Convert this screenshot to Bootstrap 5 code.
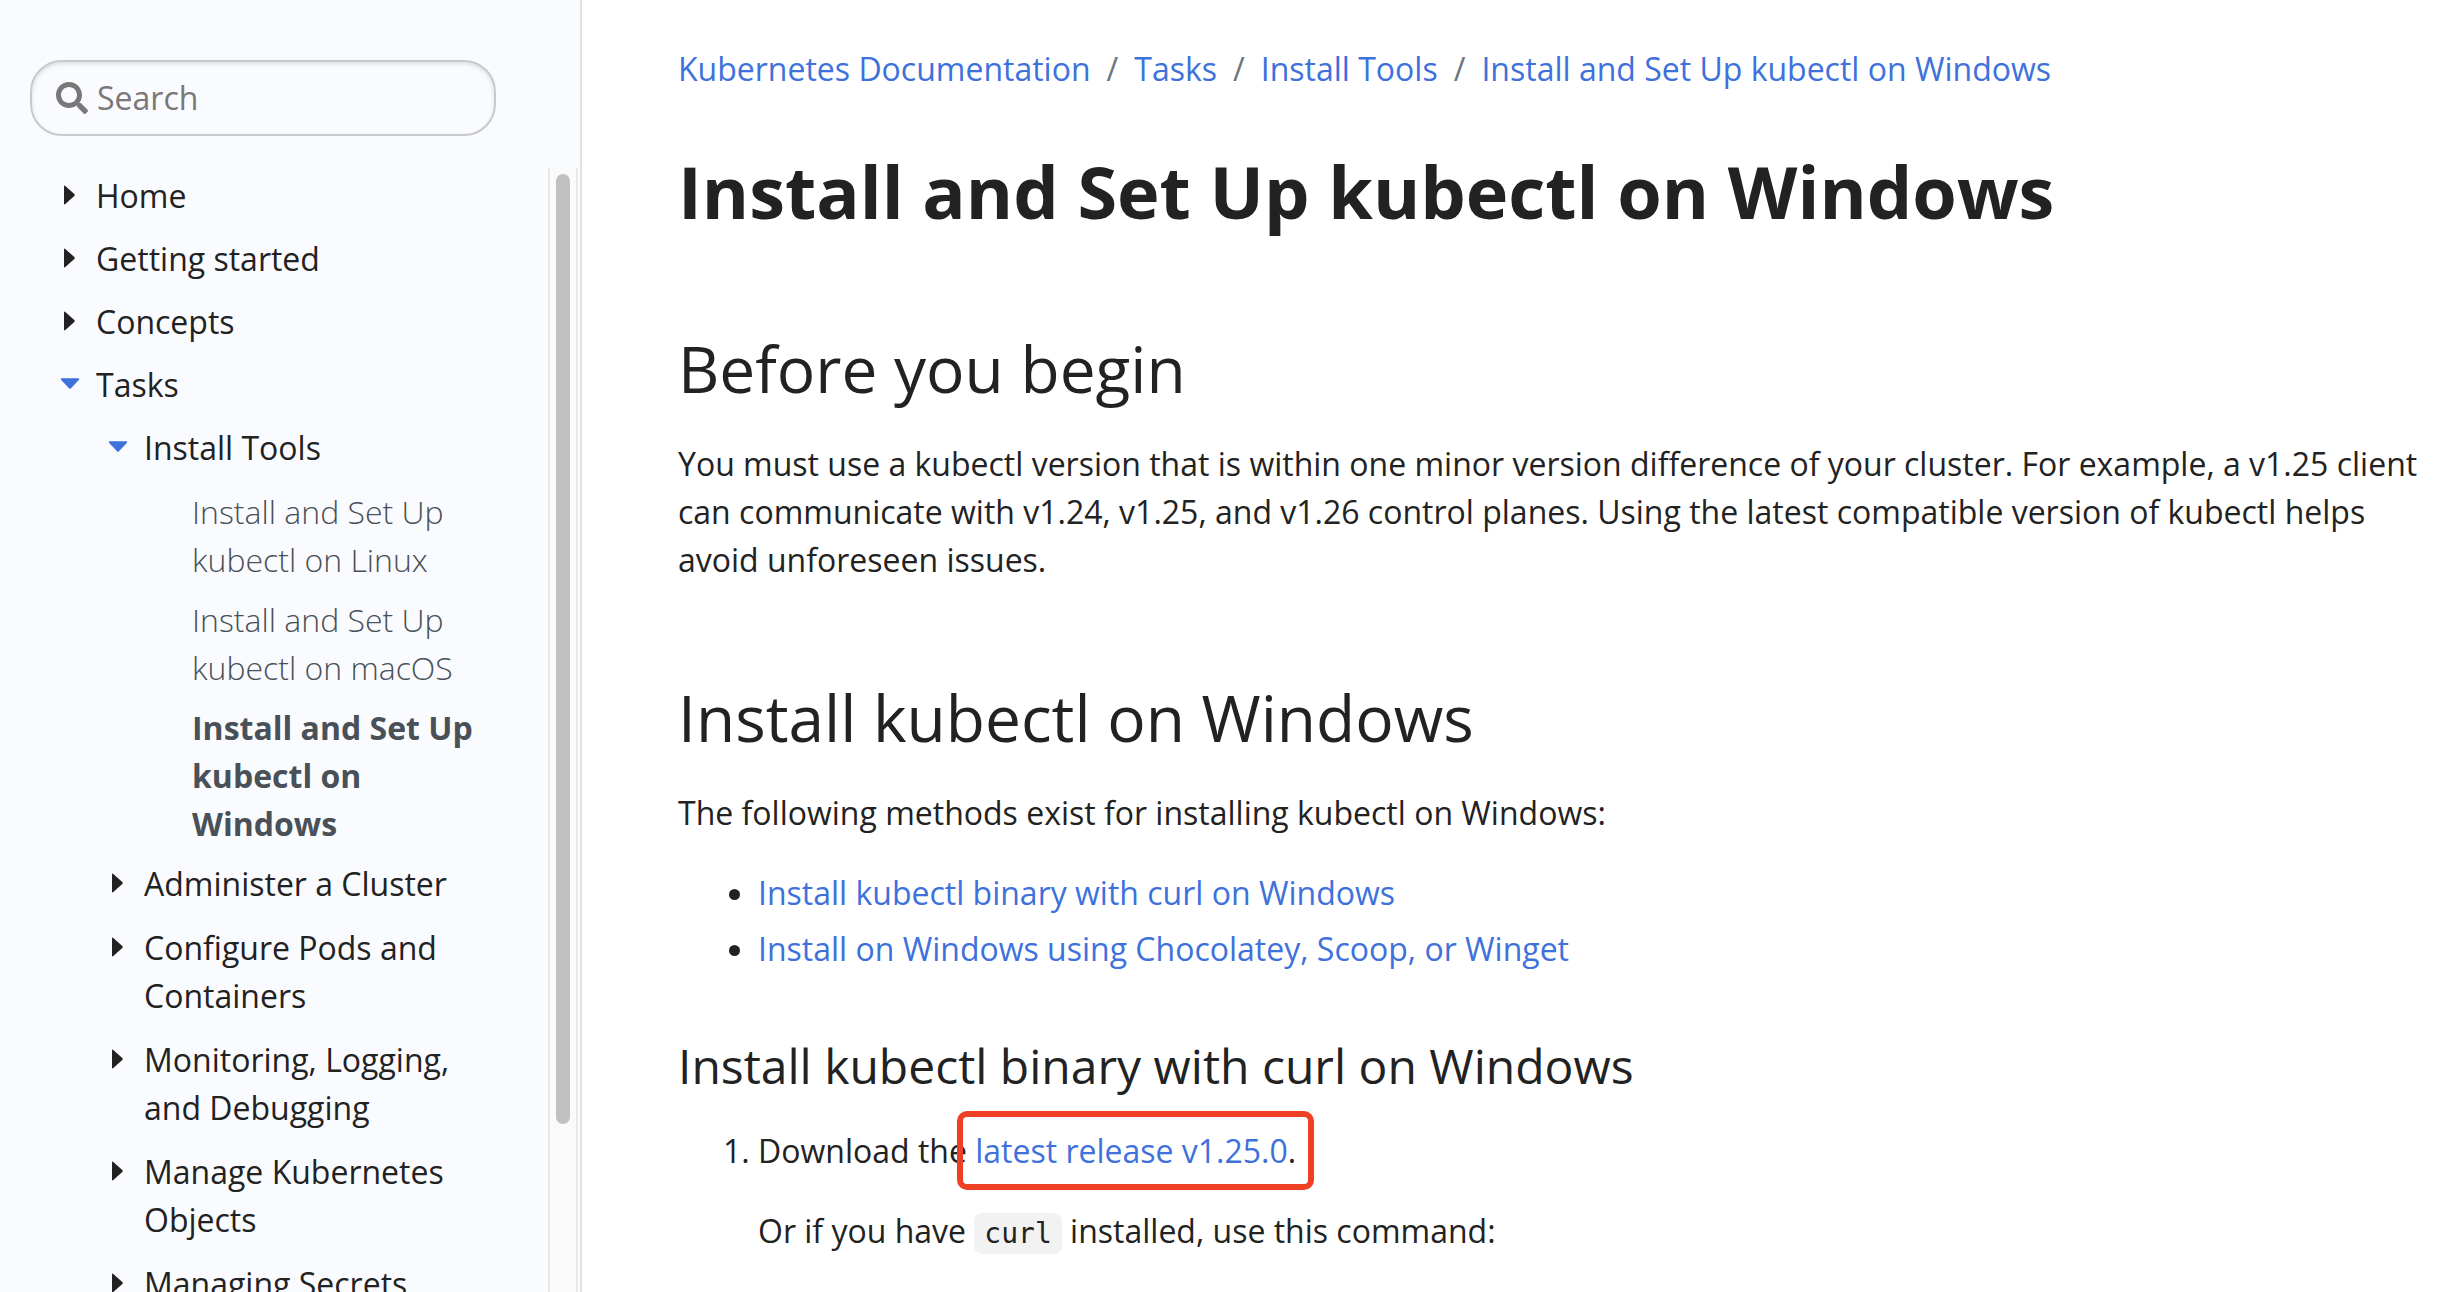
<!DOCTYPE html>
<html lang="en">
<head>
<meta charset="utf-8">
<meta name="viewport" content="width=device-width, initial-scale=1">
<title>Install and Set Up kubectl on Windows | Kubernetes</title>
<link href="https://cdn.jsdelivr.net/npm/bootstrap@5.3.0/dist/css/bootstrap.min.css" rel="stylesheet">
<style>
  body { font: 400 32px/48px "Open Sans", "Noto Sans", sans-serif; color: #222; background: #fff; }
  a { color: #3e71dc; }
  .docs-side { flex: 0 0 582px; min-width: 0; background: #fafbff; border-right: 2px solid #dee2e6; }
  .search-wrap { padding: 60px 84px 32px 30px; }
  .search-box { height: 76px; padding: 0 24px; border: 2px solid #c8c9ca; border-radius: 32px; box-shadow: inset 0 2px 4px rgba(0,0,0,.12); }
  .search-box svg { flex: none; width: 32px; height: 32px; }
  .search-box input { min-width: 0; margin-left: 9px; padding: 0; border: 0; background: transparent; color: #222; outline: 0; }
  .search-box input::placeholder { color: #797777; opacity: 1; }
  .nav-tree { min-width: 0; padding: 4px 48px 0 60px; }
  .nav-tree a { color: #222; }
  .tree-item { display: grid; grid-template-columns: 20px 1fr; column-gap: 16px; padding-bottom: 15px; }
  .nav-sub { padding-left: 48px; }
  .nav-sub .tree-item { padding-bottom: 16px; }
  .caret { width: 20px; height: 48px; fill: #222; }
  .caret.open { fill: #3e71dc; }
  .nav-leaf { padding-left: 84px; }
  .nav-leaf a { display: block; padding-bottom: 12px; color: #495057; font-weight: 300; }
  .nav-leaf a.active { font-weight: 700; }
  .scroll-track { flex: 0 0 30px; margin-right: 2px; padding: 6px 6px 0; background: #fafafa; border: solid #e8e8e8; border-width: 0 2px; }
  .scroll-thumb { height: 85%; border-radius: 8px; background: #c1c1c1; }
  .docs-main { min-width: 0; padding: 45px 32px 0 96px; }
  .breadcrumb { --bs-breadcrumb-item-padding-x: 16px; --bs-breadcrumb-divider-color: #6c757d; margin-bottom: 55px; }
  h1 { font-size: 72px; line-height: 86px; font-weight: 700; margin-bottom: 96px; }
  h2 { font-size: 64px; line-height: 77px; font-weight: 400; margin-bottom: 33px; }
  h3 { font-size: 48px; line-height: 58px; font-weight: 400; margin-bottom: 32px; }
  .docs-main p { margin-bottom: 32px; }
  .docs-main .section-end { margin-bottom: 95px; }
  .docs-main ul, .docs-main ol:not(.breadcrumb) { padding-left: 80px; margin-bottom: 64px; }
  .docs-main ul li { margin-bottom: 8px; }
  code { padding: 4px 10px; border-radius: 8px; background: #f2f2f2; color: #222; font: 28px/34px "DejaVu Sans Mono", monospace; }
  .callout-box { position: relative; }
  .callout-box::after { content: ""; position: absolute; inset: -18px -18px; border: 6px solid #ee4024; border-radius: 10px; pointer-events: none; }
</style>
</head>
<body>
<svg class="d-none" xmlns="http://www.w3.org/2000/svg">
  <symbol id="caret-right" viewBox="0 2 20 48"><path d="M4 16.500Q4 15 5.300 16L14.300 24Q15.300 25 14.300 26L5.300 34Q4 35 4 33.500Z"/></symbol>
  <symbol id="caret-down" viewBox="0 2 20 48"><path d="M1.600 19.300H18.400Q20 19.500 18.800 21L11 29.200Q10 30.200 9 29.200L1.200 21Q0 19.500 1.600 19.300Z"/></symbol>
</svg>
<div class="d-flex vh-100 overflow-hidden">
  <aside class="docs-side d-flex flex-column">
    <form class="search-wrap" role="search">
      <div class="search-box d-flex align-items-center">
        <svg viewBox="0 0 512 512" fill="#797777" aria-hidden="true"><path d="M505 442.700L405.300 343c-4.500-4.500-10.600-7-17-7H372c27.600-35.300 44-79.700 44-128C416 93.100 322.900 0 208 0S0 93.100 0 208s93.100 208 208 208c48.300 0 92.700-16.400 128-44v16.300c0 6.400 2.500 12.500 7 17l99.700 99.700c9.400 9.400 24.600 9.400 33.900 0l28.300-28.300c9.400-9.400 9.400-24.600.1-34zM208 336c-70.700 0-128-57.200-128-128 0-70.700 57.200-128 128-128 70.700 0 128 57.200 128 128 0 70.700-57.200 128-128 128z"/></svg>
        <input class="flex-grow-1" type="search" placeholder="Search" aria-label="Search">
      </div>
    </form>
    <div class="d-flex flex-grow-1 overflow-hidden">
      <nav class="nav-tree flex-grow-1" aria-label="Documentation">
        <div class="tree-item"><svg class="caret"><use href="#caret-right"/></svg><a class="text-decoration-none" href="#">Home</a></div>
        <div class="tree-item"><svg class="caret"><use href="#caret-right"/></svg><a class="text-decoration-none" href="#">Getting started</a></div>
        <div class="tree-item"><svg class="caret"><use href="#caret-right"/></svg><a class="text-decoration-none" href="#">Concepts</a></div>
        <div class="tree-item"><svg class="caret open"><use href="#caret-down"/></svg><a class="text-decoration-none" href="#">Tasks</a></div>
        <div class="nav-sub">
          <div class="tree-item"><svg class="caret open"><use href="#caret-down"/></svg><a class="text-decoration-none" href="#">Install Tools</a></div>
          <div class="nav-leaf">
            <a class="text-decoration-none" href="#">Install and Set Up kubectl on Linux</a>
            <a class="text-decoration-none" href="#">Install and Set Up kubectl on macOS</a>
            <a class="text-decoration-none active" href="#" aria-current="page">Install and Set Up kubectl on Windows</a>
          </div>
          <div class="tree-item"><svg class="caret"><use href="#caret-right"/></svg><a class="text-decoration-none" href="#">Administer a Cluster</a></div>
          <div class="tree-item"><svg class="caret"><use href="#caret-right"/></svg><a class="text-decoration-none" href="#">Configure Pods and Containers</a></div>
          <div class="tree-item"><svg class="caret"><use href="#caret-right"/></svg><a class="text-decoration-none" href="#">Monitoring, Logging, and Debugging</a></div>
          <div class="tree-item"><svg class="caret"><use href="#caret-right"/></svg><a class="text-decoration-none" href="#">Manage Kubernetes Objects</a></div>
          <div class="tree-item"><svg class="caret"><use href="#caret-right"/></svg><a class="text-decoration-none" href="#">Managing Secrets</a></div>
        </div>
      </nav>
      <div class="scroll-track" aria-hidden="true"><div class="scroll-thumb"></div></div>
    </div>
  </aside>
  <main class="docs-main flex-grow-1">
    <nav aria-label="breadcrumb">
      <ol class="breadcrumb">
        <li class="breadcrumb-item"><a class="text-decoration-none" href="#">Kubernetes Documentation</a></li>
        <li class="breadcrumb-item"><a class="text-decoration-none" href="#">Tasks</a></li>
        <li class="breadcrumb-item"><a class="text-decoration-none" href="#">Install Tools</a></li>
        <li class="breadcrumb-item"><a class="text-decoration-none" href="#">Install and Set Up kubectl on Windows</a></li>
      </ol>
    </nav>
    <h1>Install and Set Up kubectl on Windows</h1>
    <h2>Before you begin</h2>
    <p class="section-end">You must use a kubectl version that is within one minor version difference of your cluster. For example, a v1.25 client can communicate with v1.24, v1.25, and v1.26 control planes. Using the latest compatible version of kubectl helps avoid unforeseen issues.</p>
    <h2>Install kubectl on Windows</h2>
    <p>The following methods exist for installing kubectl on Windows:</p>
    <ul>
      <li><a class="text-decoration-none" href="#curl">Install kubectl binary with curl on Windows</a></li>
      <li><a class="text-decoration-none" href="#winget">Install on Windows using Chocolatey, Scoop, or Winget</a></li>
    </ul>
    <h3 id="curl">Install kubectl binary with curl on Windows</h3>
    <ol>
      <li>
        <p>Download the <span class="callout-box"><a class="text-decoration-none" href="#">latest release v1.25.0</a>.</span></p>
        <p>Or if you have <code>curl</code> installed, use this command:</p>
      </li>
    </ol>
  </main>
</div>
<script src="https://cdn.jsdelivr.net/npm/bootstrap@5.3.0/dist/js/bootstrap.bundle.min.js"></script>
</body>
</html>
